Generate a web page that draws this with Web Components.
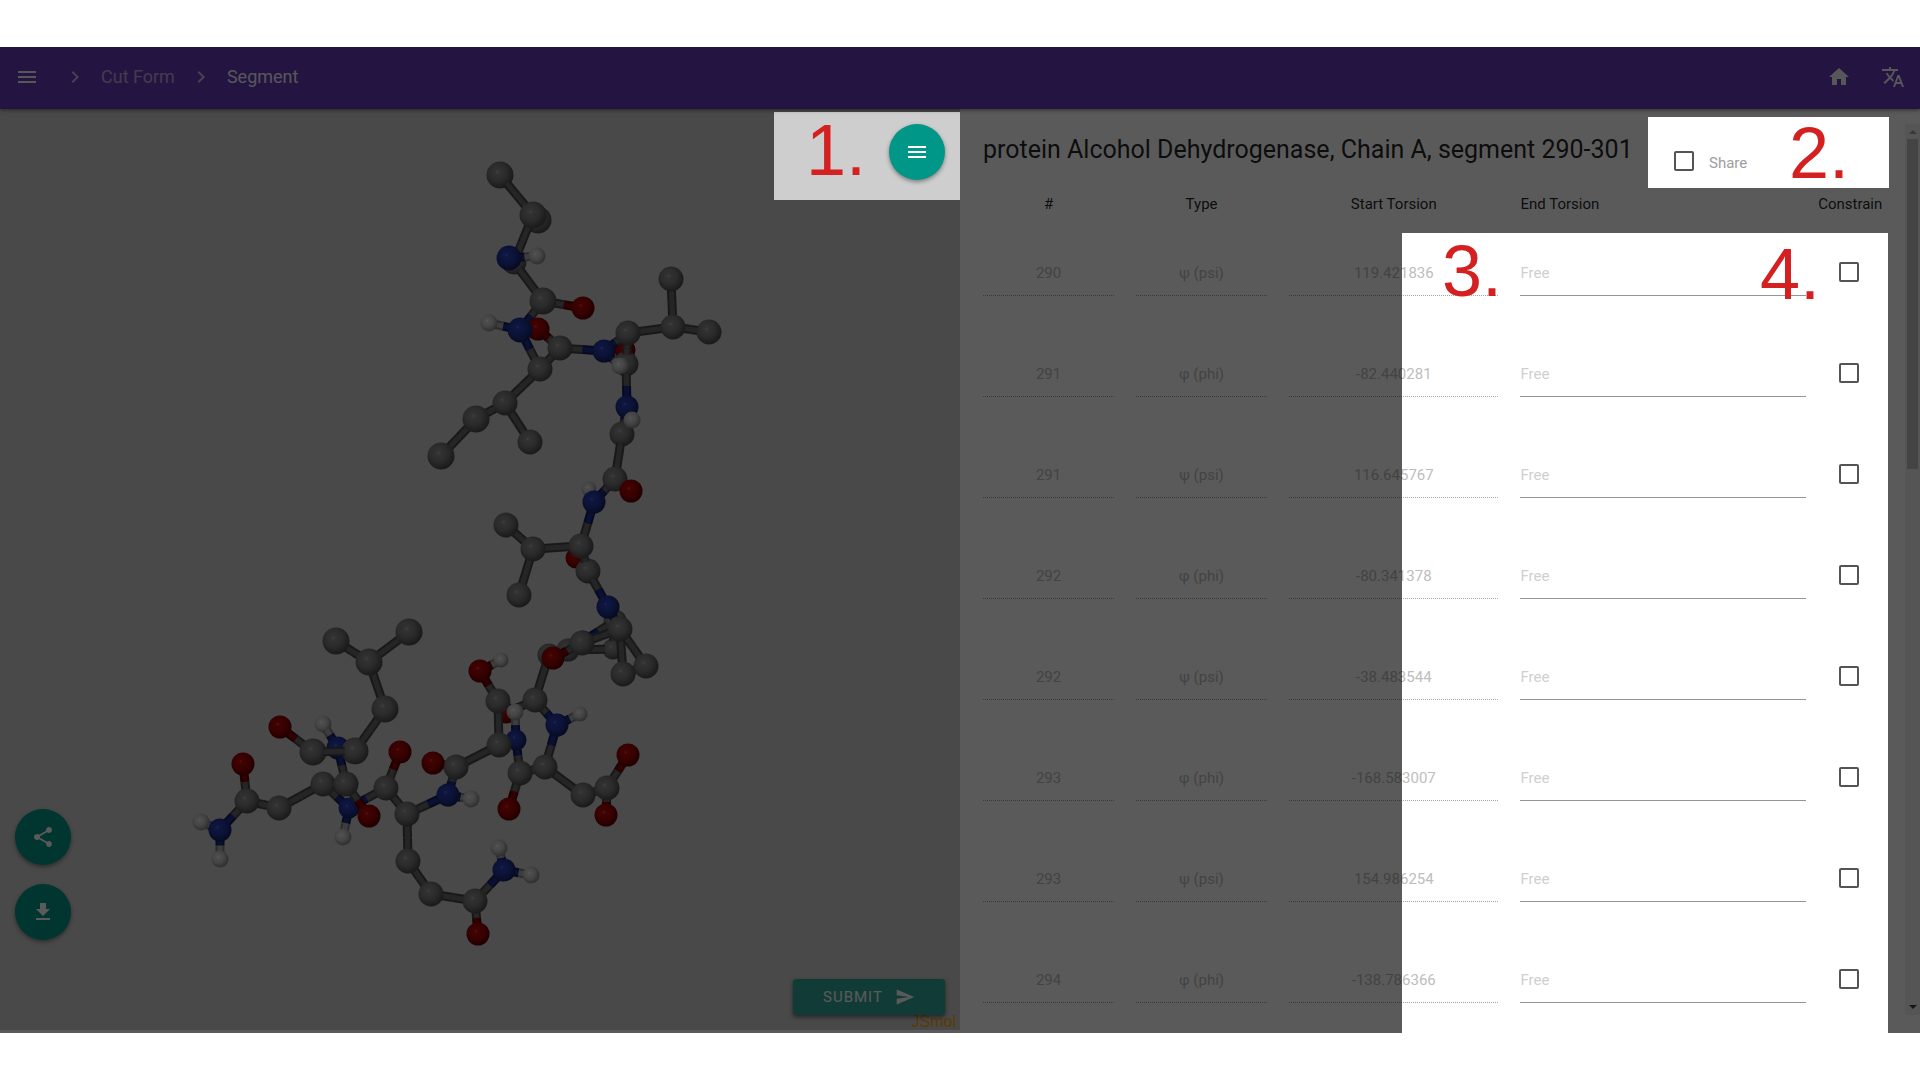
<!DOCTYPE html>
<html lang="en">
<head>
<meta charset="utf-8">
<title>Segment</title>
<style>
  body { margin: 0; background: #fff; font-family: Roboto, "Liberation Sans", sans-serif; font-size: 15px; color: rgba(0,0,0,.87); }
</style>
</head>
<body>
<torsion-app></torsion-app>
<script>
const define = (name, html, init) => {
  const tpl = document.createElement('template');
  tpl.innerHTML = html;
  customElements.define(name, class extends HTMLElement {
    constructor() {
      super();
      this.attachShadow({ mode: 'open' }).append(tpl.content.cloneNode(true));
    }
    connectedCallback() { if (init) init(this, this.shadowRoot); }
  });
};

const ICONS = {
  menu: 'M3 18h18v-2H3v2zm0-5h18v-2H3v2zm0-7v2h18V6H3z',
  chevron: 'M10 6L8.59 7.41 13.17 12l-4.58 4.59L10 18l6-6z',
  home: 'M10 20v-6h4v6h5v-8h3L12 3 2 12h3v8z',
  translate: 'M12.87 15.07l-2.54-2.51.03-.03c1.74-1.94 2.98-4.17 3.71-6.53H17V4h-7V2H8v2H1v1.99h11.17C11.5 7.92 10.44 9.75 9 11.35 8.07 10.32 7.3 9.19 6.69 8h-2c.73 1.63 1.73 3.17 2.98 4.56l-5.09 5.02L4 19l5-5 3.11 3.11.76-2.04zM18.5 10h-2L12 22h2l1.12-3h4.75L21 22h2l-4.5-12zm-2.62 7l1.62-4.33L19.12 17h-3.24z',
  share: 'M18 16.08c-.76 0-1.44.3-1.96.77L8.91 12.7c.05-.23.09-.46.09-.7s-.04-.47-.09-.7l7.05-4.11c.54.5 1.25.81 2.04.81 1.66 0 3-1.34 3-3s-1.34-3-3-3-3 1.34-3 3c0 .24.04.47.09.7L8.04 9.81C7.5 9.31 6.79 9 6 9c-1.66 0-3 1.34-3 3s1.34 3 3 3c.79 0 1.5-.31 2.04-.81l7.12 4.16c-.05.21-.08.43-.08.65 0 1.61 1.31 2.92 2.92 2.92s2.92-1.31 2.92-2.92-1.31-2.92-2.92-2.92z',
  download: 'M19 9h-4V3H9v6H5l7 7 7-7zM5 18v2h14v-2H5z',
  send: 'M2.01 21L23 12 2.01 3 2 10l15 2-15 2z'
};

define('md-icon', `
<style>
  :host { display: block; width: 24px; height: 24px; }
  svg { display: block; width: 100%; height: 100%; fill: currentColor; }
</style>
<svg viewBox="0 0 24 24" aria-hidden="true"><path></path></svg>`, (el, root) => {
  root.querySelector('path').setAttribute('d', ICONS[el.getAttribute('name')]);
});

define('icon-button', `
<style>
  :host { display: block; }
  button { display: flex; align-items: center; justify-content: center; width: 40px; height: 40px; padding: 0; border: 0; background: none; color: #fff; }
  :host([fab]) button { width: 56px; height: 56px; border-radius: 50%; background: #009688; box-shadow: 0 2px 4px rgba(0,0,0,.4); }
</style>
<button type="button"></button>`, (el, root) => {
  const button = root.querySelector('button');
  button.setAttribute('aria-label', el.getAttribute('label'));
  button.innerHTML = `<md-icon name="${el.getAttribute('icon')}"></md-icon>`;
});

define('app-bar', `
<style>
  :host { display: flex; align-items: center; height: 62px; flex: none; box-sizing: border-box; padding: 0 7px 2px; background: #673ab7; color: #fff; font-size: 18px; position: relative; z-index: 1; box-shadow: 0 1px 4px rgba(0,0,0,.5); }
  nav { display: flex; align-items: center; flex: 1; padding-left: 16px; gap: 14px; }
  md-icon { opacity: .65; }
  a { color: inherit; text-decoration: none; opacity: .55; line-height: 24px; }
  a[aria-current] { opacity: .95; }
  .tools { display: flex; gap: 14px; }
  icon-button { opacity: .95; }
</style>
<icon-button icon="menu" label="Menu"></icon-button>
<nav aria-label="Breadcrumb">
  <md-icon name="chevron"></md-icon><a href="#cut">Cut Form</a>
  <md-icon name="chevron"></md-icon><a href="#segment" aria-current="page">Segment</a>
</nav>
<div class="tools">
  <icon-button icon="home" label="Home"></icon-button>
  <icon-button icon="translate" label="Language"></icon-button>
</div>`);

/* Atoms and bonds, listed from back to front.
   "A id element x y r" is a sphere, "B a b" a two-coloured stick. */
const MOLECULE = `
A a2 C 538 220 13|A a3 C 514 262 12|B a1 a3|A a0 C 500 175 13|B a0 a1|A a1 C 533 215 13
B a3 a6|B a4 a5|A a4 N 509 258 12|A a5 H 537 256 8
B a6 a7|B a6 a8|A a6 C 543 301 13|A a7 O 583 308 11
A a10 O 538 329 11|B a10 a11|B a8 a12|B a8 a9|A a8 N 520 330 12|A a9 H 489 323 8
B a11 a12|B a11 a17|A a11 C 560 348 12|B a12 a13|A a12 C 540 369 12
B a13 a14|B a13 a16|A a13 C 505 403 12|B a14 a15|A a14 C 476 419 13|A a15 C 441 456 13|A a16 C 530 442 12
A a23 O 625 350 10|A a24 C 626 364 12|B a19 a24|B a17 a19|B a19 a20|A a19 C 628 333 12
A a17 N 604 351 11|B a17 a18|A a18 H 620 366 8
B a20 a21|B a20 a22|A a20 C 673 327 12|A a21 C 671 279 12|A a22 C 709 332 12
B a24 a25|B a25 a27|A a27 C 622 434 12|A a25 N 627 407 11|B a25 a26|A a26 H 632 420 8
B a27 a28|B a28 a30|A a28 C 615 479 12|A a29 O 631 491 11
A a31 H 589 489 7|B a30 a32|A a30 N 594 502 11
A a36 O 576 558 10|B a32 a33|A a37 C 588 571 12|B a32 a37|A a32 C 581 546 12
B a33 a34|B a33 a35|A a33 C 533 549 12|A a34 C 506 525 12|A a35 C 519 595 12
B a37 a38|A a40 C 615 621 11|A a43 C 613 649 10|B a40 a43|B a38 a39|A a38 N 608 607 11
A a46 C 568 650 11|B a46 a43|A a45 N 583 641 10|B a46 a45|B a45 a40
B a39 a41|B a39 a42|B a44 a39|A a39 C 620 629 12|B a41 a42|A a42 C 646 666 12|A a41 C 623 674 12
A a47 C 549 655 11|B a44 a48|A a44 C 582 643 12|B a47 a49|A a48 O 553 658 11
A a53 O 506 713 10|B a53 a49|B a49 a55|A a49 C 535 700 12
B a50 a51|B a50 a52|A a50 O 480 671 11|A a51 H 501 660 7
B a52 a58|A a52 C 498 701 12
B a55 a56|B a55 a64|A a55 N 557 725 11|A a56 H 580 714 7
B a54 a57|B a57 a63|A a57 N 516 740 10|A a54 H 515 712 8|B a58 a57|B a58 a59|A a58 C 499 745 12
B a59 a60|B a59 a61|A a59 C 456 767 12|A a60 O 433 763 11
B a61 a62|B a61 a70|A a61 N 448 795 11|A a62 H 471 799 8
B a63 a64|B a63 a65|A a63 C 520 773 12|B a64 a66|A a64 C 545 767 12|A a65 O 509 809 11
B a66 a67|A a66 C 583 795 12|B a67 a68|B a67 a69|A a67 C 607 788 12|A a68 O 628 755 11|A a69 O 606 815 11
B b17 a70|B a70 a71|A a70 C 407 814 12|B a71 a72|A a71 C 408 861 12|B a72 a73|A a72 C 431 894 12
B a73 a74|B a73 a75|A a73 C 475 901 12|A a74 O 478 934 11|B a75 a76|B a75 a77|A a75 N 504 870 11|A a76 H 499 848 8|A a77 H 531 875 8
A b6 H 323 724 8|B b5 b6|A b5 N 338 748 11|B b5 b13
B b0 b2|B b1 b2|B b2 b3|A b2 C 369 662 13|A b0 C 336 641 13|A b1 C 409 632 13|B b3 b4|A b3 C 385 709 13
B b7 b8|A b7 C 313 752 13|A b4 C 355 751 13|B b4 b7|A b8 O 280 727 11
B b14 b12|B b14 b17|B b14 b15|A b14 N 349 808 10|A b15 H 343 837 8
B b12 b11|A b12 C 323 784 12|B b12 b13|B b13 b16|A b13 C 346 784 12|A b16 O 369 816 11
B b17 b18|A b17 C 386 788 12|A b18 O 400 752 11
B b9 b10|B b10 b11|B b10 b19|A b10 C 247 801 12|A b11 C 279 808 12|A b9 O 243 764 11
B b19 b20|B b19 b21|A b19 N 220 830 11|A b20 H 201 822 8|A b21 H 220 859 8`;

/* highlight, lit side, body, rim */
const ELEMENTS = {
  C: ['#b4b4b4', '#8e8e8e', '#7a7a7a', '#444444'],
  N: ['#5a70e8', '#2c42b8', '#2337a0', '#121c58'],
  O: ['#f03c3c', '#b80808', '#a00404', '#560000'],
  H: ['#ffffff', '#dcdcdc', '#c4c4c4', '#7c7c7c']
};

define('molecule-view', `
<style>
  :host { display: block; width: 100%; height: 100%; }
  div { height: 100%; }
  svg { display: block; width: 100%; height: 100%; }
</style>
<div></div>`, (el, root) => {
  const items = MOLECULE.trim().split(/[|\n]/).map(s => s.trim().split(' '));
  const atoms = {};
  items.filter(i => i[0] === 'A').forEach(([, id, e, x, y, r]) => { atoms[id] = { e, x: +x, y: +y, r: +r }; });
  const grads = Object.entries(ELEMENTS).map(([e, c]) =>
    `<radialGradient id="g${e}" cx=".42" cy=".4" r=".64" fx=".4" fy=".38"><stop offset="0" stop-color="${c[0]}"/><stop offset=".12" stop-color="${c[1]}"/><stop offset=".5" stop-color="${c[2]}"/><stop offset="1" stop-color="${c[3]}"/></radialGradient>`).join('');
  const stick = (x1, y1, x2, y2, e) => {
    const c = ELEMENTS[e];
    return `<path d="M${x1} ${y1}L${x2} ${y2}" stroke="${c[3]}" stroke-width="9"/><path d="M${x1} ${y1}L${x2} ${y2}" stroke="${c[2]}" stroke-width="5" opacity=".7"/>`;
  };
  const body = items.map(i => {
    if (i[0] === 'A') {
      const a = atoms[i[1]];
      return `<circle cx="${a.x}" cy="${a.y}" r="${a.r + .5}" fill="url(#g${a.e})"/>`;
    }
    const a = atoms[i[1]], b = atoms[i[2]];
    const d = Math.hypot(b.x - a.x, b.y - a.y) || 1, ux = (b.x - a.x) / d, uy = (b.y - a.y) / d;
    const ta = Math.min(a.r * .8, d / 2), tb = Math.min(b.r * .8, d / 2);
    const ax = a.x + ux * ta, ay = a.y + uy * ta, bx = b.x - ux * tb, by = b.y - uy * tb;
    const mx = (ax + bx) / 2, my = (ay + by) / 2;
    return stick(ax, ay, mx, my, a.e) + stick(mx, my, bx, by, b.e);
  }).join('');
  root.querySelector('div').innerHTML =
    `<svg viewBox="0 109 960 921" role="img" aria-label="Ball and stick model of the segment"><defs>${grads}</defs>${body}</svg>`;
});

define('model-panel', `
<style>
  :host { display: grid; position: relative; background: #cecece; margin-bottom: 3px; min-height: 0; overflow: hidden; }
  .top, .side, .submit, .brand { position: absolute; }
  .top { top: 15px; right: 15px; }
  .side { left: 15px; bottom: 90px; display: flex; flex-direction: column; gap: 19px; }
  .brand { right: 4px; bottom: 0; font: 16px/16px "Liberation Sans", Arial, sans-serif; color: #ffa500; }
  .submit { right: 15px; bottom: 15px; display: flex; align-items: center; justify-content: space-between; width: 152px; height: 36px; padding: 0 30px; border: 0; border-radius: 3px; background: #30a89c; color: #fff; font: 15px/20px Roboto, sans-serif; letter-spacing: 1px; box-shadow: 0 2px 4px rgba(0,0,0,.5); }
  .submit md-icon { width: 20px; height: 20px; }
</style>
<molecule-view></molecule-view>
<span class="brand">JSmol</span>
<div class="top"><icon-button fab icon="menu" label="Open model menu"></icon-button></div>
<div class="side">
  <icon-button fab icon="share" label="Share model"></icon-button>
  <icon-button fab icon="download" label="Download model"></icon-button>
</div>
<button class="submit" type="submit">SUBMIT<md-icon name="send"></md-icon></button>`);

define('check-box', `
<style>
  :host { display: inline-block; }
  label { display: flex; align-items: center; gap: 15px; color: #9e9e9e; line-height: 20px; }
  span { padding-top: 4px; }
  input { appearance: none; margin: 0; width: 20px; height: 20px; box-sizing: border-box; border: 2px solid #545454; border-radius: 2px; background: transparent; }
  input:checked { background: #009688; }
  :host([bare]) label { gap: 0; }
  :host([bare]) span { display: none; }
</style>
<label><input type="checkbox"><span><slot></slot></span></label>`, (el, root) => {
  if (el.hasAttribute('label')) root.querySelector('input').setAttribute('aria-label', el.getAttribute('label'));
});

const ROWS = [
  ['290', 'ψ (psi)', '119.421836'], ['291', 'φ (phi)', '-82.440281'],
  ['291', 'ψ (psi)', '116.645767'], ['292', 'φ (phi)', '-80.341378'],
  ['292', 'ψ (psi)', '-38.483544'], ['293', 'φ (phi)', '-168.583007'],
  ['293', 'ψ (psi)', '154.986254'], ['294', 'φ (phi)', '-138.786366']
];

define('torsion-table', `
<style>
  :host { display: block; }
  table { width: 100%; table-layout: fixed; border-collapse: collapse; }
  th { height: 36px; padding: 2px 11px 0; font-weight: 400; line-height: 20px; text-align: center; }
  th.end { text-align: left; }
  td { height: 101px; padding: 0 11px; text-align: center; }
  th:last-child { padding: 2px 0 0; }
  td:last-child { height: 99px; padding: 0 2px 2px 0; }
  check-box { display: block; width: 20px; margin: 0 auto; }
  input { display: block; width: 100%; height: 46px; box-sizing: border-box; margin: 0; padding: 2px 0 0; border: 0; border-bottom: 1px solid #949494; border-radius: 0; background: transparent; font: inherit; line-height: 20px; color: inherit; }
  input:disabled { text-align: center; color: #bdbdbd; border-bottom: 1px dotted #a4a4a4; }
  input::placeholder { color: #cfcfcf; opacity: 1; }
  .n { width: 16.8%; } .s { width: 25.4%; } .e { width: 33.8%; }
</style>
<table>
  <colgroup><col class="n"><col class="n"><col class="s"><col class="e"><col></colgroup>
  <thead><tr><th>#</th><th>Type</th><th>Start Torsion</th><th class="end">End Torsion</th><th>Constrain</th></tr></thead>
  <tbody></tbody>
</table>`, (el, root) => {
  const names = ['Residue', 'Type', 'Start torsion'];
  root.querySelector('tbody').innerHTML = ROWS.map(r => '<tr>' +
    r.map((v, i) => `<td><input disabled aria-label="${names[i]}" value="${v}"></td>`).join('') +
    `<td><input placeholder="Free" aria-label="End torsion ${r[0]} ${r[1]}"></td><td><check-box bare label="Constrain ${r[0]} ${r[1]}"></check-box></td></tr>`).join('');
});

define('scroll-track', `
<style>
  :host { display: flex; flex-direction: column; align-items: center; width: 15px; background: #f1f1f1; }
  i { display: block; border: 4px solid transparent; }
  .up { border-top: 0; border-bottom-color: #a0a0a0; margin: 6px 0 5px; }
  .thumb { width: 11px; flex: 0 0 37%; background: #c1c1c1; }
  .down { border-bottom: 0; border-top-color: #404040; margin: auto 0 6px; }
</style>
<i class="up"></i><div class="thumb"></div><i class="down"></i>`);

define('segment-form', `
<style>
  :host { display: flex; gap: 22px; box-sizing: border-box; padding: 15px 0 18px 12px; min-height: 0; min-width: 0; }
  .content { flex: 1; min-width: 0; }
  .head { display: flex; height: 60px; padding-left: 11px; }
  h1 { flex: 1; margin: 0; font-size: 25px; line-height: 52px; font-weight: 400; white-space: nowrap; }
  .share { width: 209px; padding-top: 25px; }
</style>
<div class="content">
  <div class="head">
    <h1>protein Alcohol Dehydrogenase, Chain A, segment 290-301</h1>
    <div class="share"><check-box>Share</check-box></div>
  </div>
  <torsion-table></torsion-table>
</div>
<scroll-track></scroll-track>`);

/* Dimmed layer with three windows and the numbered callouts. */
define('tour-overlay', `
<style>
  :host { position: absolute; inset: 0; z-index: 5; pointer-events: none; }
  .dim {
    position: absolute; inset: 0; background: rgba(0,0,0,.647);
    clip-path: polygon(evenodd,
      0 0, 100% 0, 100% 100%, 0 100%, 0 0,
      calc(50% - 186px) 65px, 50% 65px, 50% 153px, calc(50% - 186px) 153px, calc(50% - 186px) 65px, 0 0,
      calc(100% - 272px) 70px, calc(100% - 31px) 70px, calc(100% - 31px) 141px, calc(100% - 272px) 141px, calc(100% - 272px) 70px, 0 0,
      calc(100% - 518px) 186px, calc(100% - 32px) 186px, calc(100% - 32px) 100%, calc(100% - 518px) 100%, calc(100% - 518px) 186px, 0 0);
  }
  b { position: absolute; font: 400 72px/72px "Liberation Sans", Arial, sans-serif; color: #d42020; }
  .n1 { left: calc(50% - 154px); top: 67px; }
  .n2 { right: 71px; top: 70px; }
  .n3 { right: 418px; top: 188px; }
  .n4 { right: 100px; top: 191px; }
</style>
<div class="dim"></div>
<b class="n1">1.</b><b class="n2">2.</b><b class="n3">3.</b><b class="n4">4.</b>`);

define('torsion-app', `
<style>
  :host { display: flex; flex-direction: column; position: relative; margin: 47px 0; height: calc(100vh - 94px); overflow: hidden; background: #fff; }
  main { flex: 1; display: grid; grid-template-columns: 1fr 1fr; min-height: 0; }
</style>
<app-bar></app-bar>
<main>
  <model-panel></model-panel>
  <segment-form></segment-form>
</main>
<tour-overlay></tour-overlay>`);
</script>
</body>
</html>
